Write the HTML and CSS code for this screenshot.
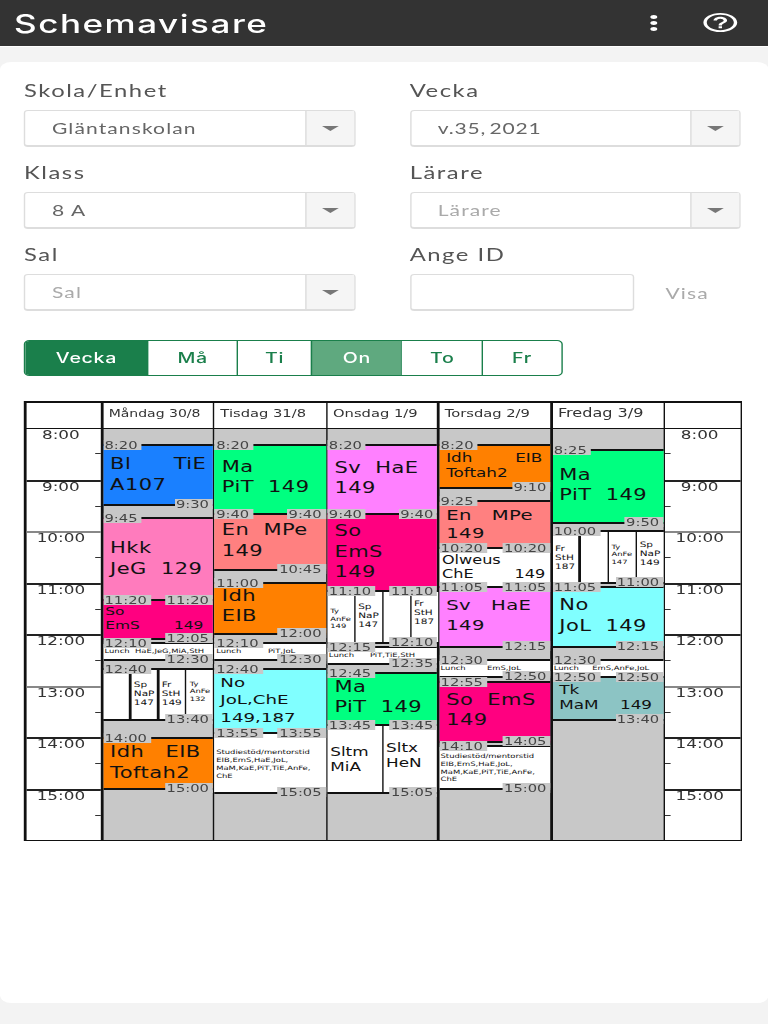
FILE: index.html
```html
<!DOCTYPE html>
<html lang="sv">

<head>
    <meta charset="UTF-8">
    <title>Schemavisare</title>
    <link rel="stylesheet" href="styles.css">
</head>

<body>
    <div class="page">
        <!-- topbar -->
        <div class="topbar">
            <span class="title">Schemavisare</span>
            <svg class="icon-more" viewBox="0 0 24 24" preserveAspectRatio="none"><path d="M12 8c1.1 0 2-.9 2-2s-.9-2-2-2-2 .9-2 2 .9 2 2 2zm0 2c-1.1 0-2 .9-2 2s.9 2 2 2 2-.9 2-2-.9-2-2-2zm0 6c-1.1 0-2 .9-2 2s.9 2 2 2 2-.9 2-2-.9-2-2-2z"/></svg>
            <svg class="icon-help" viewBox="0 0 24 24" preserveAspectRatio="none"><path d="M11 18h2v-2h-2v2zm1-16C6.48 2 2 6.48 2 12s4.48 10 10 10 10-4.48 10-10S17.52 2 12 2zm0 18c-4.41 0-8-3.59-8-8s3.59-8 8-8 8 3.59 8 8-3.59 8-8 8zm0-14c-2.21 0-4 1.79-4 4h2c0-1.1.9-2 2-2s2 .9 2 2c0 2-3 1.75-3 5h2c0-2.25 3-2.5 3-5 0-2.21-1.79-4-4-4z"/></svg>
        </div>

        <div class="card">
            <!-- filters -->
            <div class="filters">
                <div class="field">
                    <label>Skola/Enhet</label>
                    <div class="select"><span class="value">Gläntanskolan</span><span class="caret"></span></div>
                </div>
                <div class="field">
                    <label>Vecka</label>
                    <div class="select"><span class="value week">v.35, 2021</span><span class="caret"></span></div>
                </div>
                <div class="field">
                    <label>Klass</label>
                    <div class="select"><span class="value">8 A</span><span class="caret"></span></div>
                </div>
                <div class="field">
                    <label>Lärare</label>
                    <div class="select"><span class="value off">Lärare</span><span class="caret"></span></div>
                </div>
                <div class="field">
                    <label>Sal</label>
                    <div class="select"><span class="value off">Sal</span><span class="caret"></span></div>
                </div>
                <div class="field">
                    <label>Ange ID</label>
                    <div class="id-row">
                        <div class="id-input"></div>
                        <span class="visa">Visa</span>
                    </div>
                </div>
            </div>

            <!-- tabs -->
            <div class="tabs">
                <span class="tab tab-vecka active">Vecka</span>
                <span class="tab tab-ma">Må</span>
                <span class="tab tab-ti">Ti</span>
                <span class="tab tab-on current">On</span>
                <span class="tab tab-to">To</span>
                <span class="tab tab-fr">Fr</span>
            </div>

            <!-- schedule: --s and --e are start and end in minutes after 8:00, --p is the text offset -->
            <div class="schedule">
                <div class="head"></div>
                <div class="head head-mon">Måndag 30/8</div>
                <div class="head">Tisdag 31/8</div>
                <div class="head">Onsdag 1/9</div>
                <div class="head">Torsdag 2/9</div>
                <div class="head head-fri">Fredag 3/9</div>
                <div class="head"></div>

                <div class="time">
                    <div class="hour">8:00</div>
                    <div class="hour">9:00</div>
                    <div class="hour pale">10:00</div>
                    <div class="hour">11:00</div>
                    <div class="hour">12:00</div>
                    <div class="hour pale">13:00</div>
                    <div class="hour">14:00</div>
                    <div class="hour">15:00</div>
                </div>

                <!-- mandag -->
                <div class="day">
                    <div class="event big blue" style="--s:20;--e:90;--p:6.5"><span class="stamp start">8:20</span><span class="stamp end">9:30</span>Bl      TiE
A107</div>
                    <div class="event big pink" style="--s:105;--e:200;--p:17.4"><span class="stamp start">9:45</span>Hkk
JeG  129</div>
                    <div class="event sm rose" style="--s:200;--e:245;--p:2"><span class="stamp start">11:20</span><span class="stamp right">11:20</span><span class="stamp end">12:05</span>So
EmS       149</div>
                    <div class="event tiny white" style="--s:250;--e:270;--p:1.2"><span class="stamp start">12:10</span><span class="stamp end">12:30</span>Lunch  HaE,JeG,MiA,StH</div>
                    <div class="event split" style="--s:280;--e:340"><span class="stamp start">12:40</span><span class="stamp end">13:40</span>
                        <div class="part"></div>
                        <div class="part xs" style="--p:9">Sp
NaP
147</div>
                        <div class="part xs" style="--p:9">Fr
StH
149</div>
                        <div class="part xxs" style="--p:9">Ty
AnFe
132</div>
                    </div>
                    <div class="event big orange" style="--s:360;--e:420;--p:2.1"><span class="stamp start">14:00</span><span class="stamp end">15:00</span>Idh   EIB
Toftah2</div>
                </div>

                <!-- tisdag -->
                <div class="day">
                    <div class="event big green" style="--s:20;--e:100;--p:9.3"><span class="stamp start">8:20</span>Ma
PiT  149</div>
                    <div class="event big salmon" style="--s:100;--e:165;--p:3.5"><span class="stamp start">9:40</span><span class="stamp right">9:40</span><span class="stamp end">10:45</span>En  MPe
149</div>
                    <div class="event big orange" style="--s:180;--e:240;--p:0.7"><span class="stamp start">11:00</span><span class="stamp end">12:00</span>Idh
EIB</div>
                    <div class="event tiny white" style="--s:250;--e:270;--p:1.2"><span class="stamp start">12:10</span><span class="stamp end">12:30</span>Lunch          PiT,JoL</div>
                    <div class="event big cyan tight" style="--s:280;--e:355;--p:2.5"><span class="stamp start">12:40</span>No
JoL,ChE
149,187</div>
                    <div class="event tiny white study" style="--s:355;--e:425;--p:12.6"><span class="stamp start">13:55</span><span class="stamp right">13:55</span><span class="stamp end">15:05</span>Studiestöd/mentorstid
EIB,EmS,HaE,JoL,
MaM,KaE,PiT,TiE,AnFe,
ChE</div>
                </div>

                <!-- onsdag -->
                <div class="day">
                    <div class="event big lilac" style="--s:20;--e:100;--p:10"><span class="stamp start">8:20</span>Sv  HaE
149</div>
                    <div class="event big rose" style="--s:100;--e:190;--p:4.75"><span class="stamp start">9:40</span><span class="stamp right">9:40</span>So
EmS
149</div>
                    <div class="event split" style="--s:190;--e:250"><span class="stamp start">11:10</span><span class="stamp right">11:10</span><span class="stamp end">12:10</span>
                        <div class="part xxs" style="--p:13.8">Ty
AnFe
149</div>
                        <div class="part xs" style="--p:9">Sp
NaP
147</div>
                        <div class="part"></div>
                        <div class="part xs" style="--p:6">Fr
StH
187</div>
                    </div>
                    <div class="event tiny white" style="--s:255;--e:275;--p:1.2"><span class="stamp start">12:15</span><span class="stamp end">12:35</span>Lunch      PiT,TiE,StH</div>
                    <div class="event big green" style="--s:285;--e:345;--p:1.3"><span class="stamp start">12:45</span>Ma
PiT  149</div>
                    <div class="event split" style="--s:345;--e:425"><span class="stamp start">13:45</span><span class="stamp right">13:45</span><span class="stamp end">15:05</span>
                        <div class="part md" style="--p:18.5">Sltm
MiA</div>
                        <div class="part md" style="--p:14.5">Sltx
HeN</div>
                    </div>
                </div>

                <!-- torsdag -->
                <div class="day">
                    <div class="event md orange" style="--s:20;--e:70;--p:3.3"><span class="stamp start">8:20</span><span class="stamp end">9:10</span>Idh        EIB
Toftah2</div>
                    <div class="event lg salmon" style="--s:85;--e:140;--p:2.2"><span class="stamp start">9:25</span>En   MPe
149</div>
                    <div class="event sm2 white" style="--s:140;--e:185;--p:2.6"><span class="stamp start">10:20</span><span class="stamp right">10:20</span>Olweus
ChE        149</div>
                    <div class="event lg lilac wide-lh" style="--s:185;--e:255;--p:5.9"><span class="stamp start">11:05</span><span class="stamp right">11:05</span><span class="stamp end">12:15</span>Sv   HaE
149</div>
                    <div class="event tiny white" style="--s:270;--e:290;--p:1.2"><span class="stamp start">12:30</span><span class="stamp end">12:50</span>Lunch        EmS,JoL</div>
                    <div class="event big rose" style="--s:295;--e:365;--p:5.7"><span class="stamp start">12:55</span><span class="stamp end">14:05</span>So  EmS
149</div>
                    <div class="event tiny white study" style="--s:370;--e:420;--p:3.6"><span class="stamp start">14:10</span><span class="stamp end">15:00</span>Studiestöd/mentorstid
EIB,EmS,HaE,JoL,
MaM,KaE,PiT,TiE,AnFe,
ChE</div>
                </div>

                <!-- fredag -->
                <div class="day">
                    <div class="event big green" style="--s:25;--e:110;--p:12.5"><span class="stamp start">8:25</span><span class="stamp end">9:50</span>Ma
PiT  149</div>
                    <div class="event split" style="--s:120;--e:180"><span class="stamp start">10:00</span><span class="stamp end">11:00</span>
                        <div class="part xs" style="--p:11">Fr
StH
187</div>
                        <div class="part"></div>
                        <div class="part xxs" style="--p:9.7">Ty
AnFe
147</div>
                        <div class="part xs" style="--p:7">Sp
NaP
149</div>
                    </div>
                    <div class="event big cyan" style="--s:185;--e:255;--p:5.9"><span class="stamp start">11:05</span><span class="stamp end">12:15</span>No
JoL  149</div>
                    <div class="event tiny white" style="--s:270;--e:290;--p:1.2"><span class="stamp start">12:30</span>Lunch     EmS,AnFe,JoL</div>
                    <div class="event md teal" style="--s:290;--e:340;--p:3"><span class="stamp start">12:50</span><span class="stamp right">12:50</span><span class="stamp end">13:40</span>Tk
MaM    149</div>
                </div>

                <div class="time time-right">
                    <div class="hour">8:00</div>
                    <div class="hour">9:00</div>
                    <div class="hour pale">10:00</div>
                    <div class="hour">11:00</div>
                    <div class="hour">12:00</div>
                    <div class="hour pale">13:00</div>
                    <div class="hour">14:00</div>
                    <div class="hour">15:00</div>
                </div>
            </div>
        </div>
    </div>
</body>

</html>
```

FILE: styles.css
```css
* {
    margin: 0;
    padding: 0;
    box-sizing: border-box;
}

body {
    background: #f3f3f3;
    overflow: hidden;
}

/* the whole screen is stretched sideways, so all widths below are real width / 1.4 */
.page {
    width: 548.57px;
    height: 1024px;
    transform: scaleX(1.4);
    transform-origin: 0 0;
    font-family: "Lato", "Liberation Sans", sans-serif;
}

/* topbar */
.topbar {
    display: flex;
    align-items: center;
    height: 47px;
    padding: 0 20px 1px 10px;
    background: #333;
    border-bottom: 1px solid #fff;
}

.title {
    margin-right: auto;
    padding-top: 2px;
    color: #fff;
    font-family: "Inter", sans-serif;
    font-size: 25px;
    font-weight: 500;
    letter-spacing: 1.1px;
}

.icon-more {
    width: 30px;
    height: 24px;
    margin-right: 18px;
    fill: #fff;
}

.icon-help {
    width: 29px;
    height: 23px;
    fill: #fff;
}

/* card */
.card {
    height: 941px;
    margin-top: 15px;
    padding: 14px 0 0 17.14px;
    background: #fff;
    border-radius: 8px;
}

.filters {
    display: grid;
    grid-template-columns: 237px 236.5px;
    column-gap: 38.5px;
    row-gap: 11px;
}

.field label {
    display: block;
    height: 34px;
    color: #555;
    font-size: 17px;
    line-height: 30px;
    letter-spacing: 1.1px;
}

.select {
    display: flex;
    height: 37px;
    border: 1px solid #ddd;
    border-bottom-width: 2px;
    border-radius: 3px;
}

.value {
    flex: 1;
    padding-left: 19px;
    color: #666;
    font-size: 15px;
    line-height: 34px;
    letter-spacing: 0.8px;
}

.value.week {
    word-spacing: -2px;
    letter-spacing: 0.6px;
}

.value.off {
    color: #aaa;
}

.caret {
    position: relative;
    width: 35.5px;
    background: #f5f5f5;
    border-left: 1px solid #ddd;
}

.caret::after {
    content: "";
    position: absolute;
    left: 11px;
    top: 15px;
    border-left: 6px solid transparent;
    border-right: 6px solid transparent;
    border-top: 5px solid #777;
}

.id-row {
    display: flex;
    align-items: center;
}

.id-input {
    width: 160.7px;
    height: 37px;
    border: 1px solid #ddd;
    border-bottom-width: 2px;
    border-radius: 3px;
}

.visa {
    margin-left: 22px;
    color: #aaa;
    font-size: 15px;
    letter-spacing: 0.8px;
}

/* tabs */
.tabs {
    display: flex;
    width: 384.4px;
    height: 36px;
    margin-top: 29px;
    border: 1px solid #1a7f4b;
    border-radius: 4px;
    overflow: hidden;
}

.tab {
    color: #1a7f4b;
    border-left: 1px solid #1a7f4b;
    font-family: "Inter", sans-serif;
    font-size: 14px;
    font-weight: 500;
    line-height: 34px;
    letter-spacing: 0.5px;
    text-align: center;
}

.tab.active {
    background: #1a7f4b;
    color: #fff;
    border-left: 0;
}

.tab.current {
    background: #5fa97f;
    color: #fff;
}

.tab-vecka { width: 87.3px; }
.tab-ma { width: 63.4px; }
.tab-ti { width: 53.6px; }
.tab-on { width: 64px; }
.tab-to { width: 57.9px; }
.tab-fr { flex: 1; }

/* schedule */
.schedule {
    display: grid;
    grid-template-columns: 75.5fr 110fr 111fr 110fr 111.5fr 111fr 75fr;
    grid-template-rows: 25px 411px;
    gap: 1px 1.2px;
    width: 512.86px;
    height: 440px;
    margin-top: 25px;
    padding: 2px 1.4px 1px;
    background: #111;
    font-family: "DejaVu Sans", sans-serif;
    color: #111;
}

.head {
    background: #fff;
    padding-left: 4px;
    color: #333;
    font-size: 10.5px;
    line-height: 21px;
    white-space: nowrap;
}

.head-mon { font-size: 10px; }
.head-fri { font-size: 11.5px; }

.time {
    display: flex;
    flex-direction: column;
    background: #fff;
}

.hour {
    position: relative;
    height: 51.6px;
    padding-right: 4px;
    border-top: 2px solid #222;
    color: #333;
    font-size: 12px;
    line-height: 11px;
    text-align: center;
}

.hour:first-child {
    height: 50.6px;
    border-top: 0;
    line-height: 13px;
}

.hour.pale {
    border-top-color: #888;
}

/* half hour tick */
.hour::after {
    content: "";
    position: absolute;
    right: 0;
    top: 24px;
    width: 4px;
    height: 1px;
    background: #333;
}

.time-right .hour::after {
    right: auto;
    left: 0;
}

.day {
    position: relative;
    background: #c8c8c8;
}

.event {
    position: absolute;
    left: 0;
    right: 0;
    top: calc(var(--s) * 0.86px - 2px);
    height: calc((var(--e) - var(--s)) * 0.86px + 2px);
    padding: calc(var(--p, 0) * 1px + 1.5px) 0 0 5px;
    border-top: 2px solid #111;
    border-bottom: 2px solid #111;
    white-space: pre;
}

.big { font-size: 15px; line-height: 20.5px; letter-spacing: 0.3px; }
.lg { font-size: 14px; line-height: 18px; letter-spacing: 0.3px; }
.wide-lh { line-height: 20px; }
.md { font-size: 12px; line-height: 15px; }
.sm { font-size: 11px; line-height: 14px; padding-left: 1.5px; }
.sm2 { font-size: 11.5px; line-height: 14px; padding-left: 2px; }
.tiny { font-size: 6px; line-height: 7px; padding-left: 1px; }
.study { line-height: 7.7px; }
.tight { font-size: 13px; line-height: 17.5px; padding-left: 4px; letter-spacing: 0; }

.blue { background: #1a80ff; }
.pink { background: #ff7bbd; }
.rose { background: #ff0080; }
.orange { background: #ff8000; }
.green { background: #00ff80; }
.salmon { background: #ff8080; }
.lilac { background: #ff80ff; }
.cyan { background: #80ffff; }
.teal { background: #8cc4c4; }
.white { background: #fff; }

/* lessons that share a time */
.split {
    display: flex;
    gap: 1.2px;
    padding: 0;
    background: #111;
}

.part {
    flex: 1;
    min-width: 0;
    padding: calc(var(--p, 0) * 1px + 1px) 0 0 2px;
    background: #fff;
}

.xs { font-size: 7.5px; line-height: 9px; }
.xxs { font-size: 6px; line-height: 7.5px; }

/* grey time labels */
.stamp {
    position: absolute;
    z-index: 2;
    height: 10px;
    padding: 0 3px 0 1px;
    background: #c8c8c8;
    color: #444;
    font-size: 10.5px;
    letter-spacing: 0;
    line-height: 10px;
}

.start {
    left: 0;
    top: -6px;
}

.right {
    right: 0;
    top: -6px;
}

.end {
    right: 0;
    bottom: -5px;
}
```
